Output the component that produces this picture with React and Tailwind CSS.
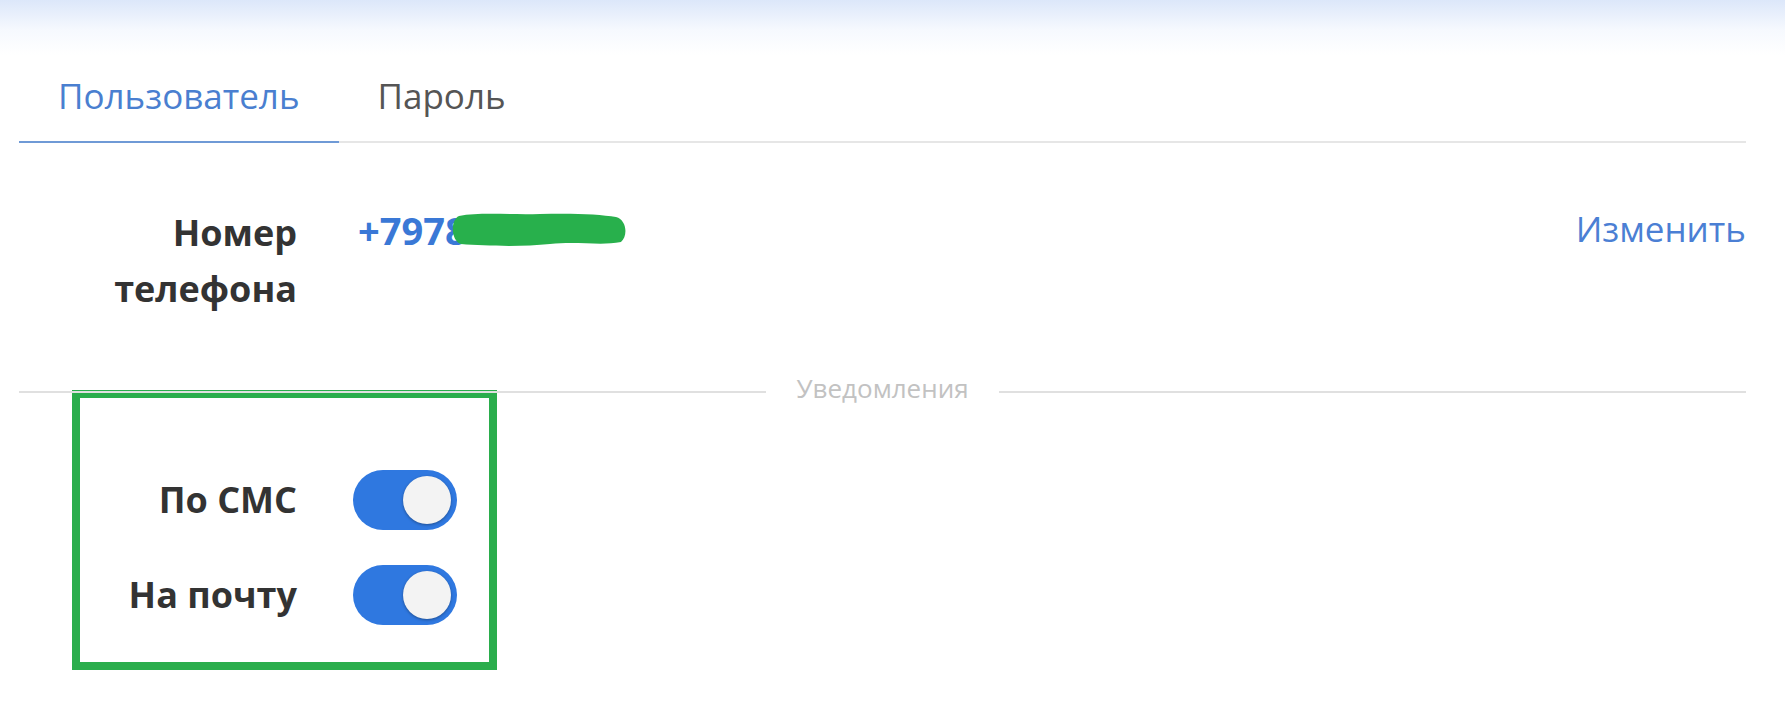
import React from 'react';

const Toggle = () => (
    <div className="flex items-center justify-end w-[104px] h-[60px] rounded-full bg-[#2f78e0] pr-[6px]">
        <div className="w-[48px] h-[48px] rounded-full bg-[#f3f3f3] shadow-[0_1px_3px_rgba(0,0,0,0.35)]"></div>
    </div>
);

const App = () => {
    return (
        <div className="min-h-screen w-full bg-[linear-gradient(to_bottom,#dce7fa_0px,#f6f9fe_30px,#ffffff_55px)] pt-[48px] pl-[19px] pr-[39px] font-['Open_Sans',sans-serif]">
            {/* Tabs */}
            <div className="flex border-b-2 border-[#e6e6e6]">
                <div className="-mb-[2px] border-b-2 border-[#6f9ad6] px-[39px] pt-[25px] pb-[22px] text-[35px] leading-[46px] text-[#4a7fd0]">
                    Пользователь
                </div>
                <div className="px-[39px] pt-[25px] pb-[22px] text-[35px] leading-[46px] text-[#555555]">
                    Пароль
                </div>
            </div>

            {/* Phone row */}
            <div className="flex items-start mt-[62px]">
                <div className="w-[278px] text-right text-[36px] leading-[56px] font-bold text-[#333333]">
                    Номер<br />телефона
                </div>
                <div className="ml-[61px] flex-1 pt-[6px] text-[38px] leading-[38px] font-bold text-[#3a78d6]">
                    <span className="relative inline-block">
                        +7978<span className="invisible">1234567</span>
                        <svg className="absolute left-[92px] top-[2px]" width="177" height="34" viewBox="0 0 177 34">
                            <path d="M9 3 C30 -1 60 2 90 1 C120 0 150 1 166 4 C177 7 178 23 171 29 C150 33 128 28 100 31 C72 34 36 33 11 31 C1 28 0 7 9 3Z" fill="#28b04c" />
                        </svg>
                    </span>
                </div>
                <div className="pt-[5px] text-[35px] leading-[38px] text-[#4b7fd4]">Изменить</div>
            </div>

            {/* Divider */}
            <div className="flex items-center mt-[53px]">
                <div className="flex-1 h-[2px] bg-[#e0e0e0] translate-y-[4px]"></div>
                <div className="px-[30px] text-[26px] leading-[36px] text-[#c2c2c2]">Уведомления</div>
                <div className="flex-1 h-[2px] bg-[#e0e0e0] translate-y-[4px]"></div>
            </div>

            {/* Notifications */}
            <div className="-mt-[16px] ml-[53px] w-[425px] h-[280px] border-[8px] border-[#2aad4c] pt-[72px] flex flex-col gap-[35px]">
                <div className="flex items-center">
                    <div className="w-[217px] text-right text-[36px] leading-[50px] font-bold text-[#333333]">По СМС</div>
                    <div className="ml-[56px]"><Toggle /></div>
                </div>
                <div className="flex items-center">
                    <div className="w-[217px] text-right text-[36px] leading-[50px] font-bold text-[#333333]">На почту</div>
                    <div className="ml-[56px]"><Toggle /></div>
                </div>
            </div>
        </div>
    );
};

export default App;
